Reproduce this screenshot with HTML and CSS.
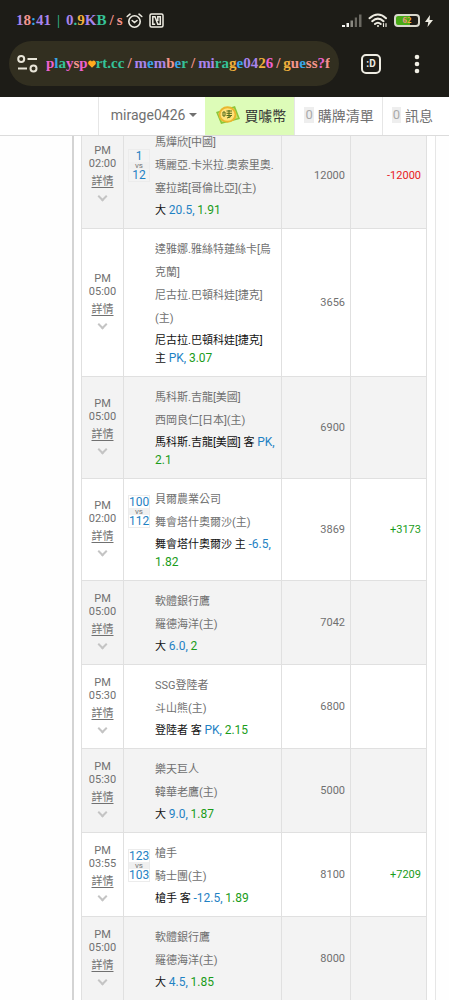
FILE: index.html
```html
<!DOCTYPE html>
<html lang="zh-Hant">
<head>
    <meta charset="utf-8">
    <meta name="viewport" content="width=device-width, initial-scale=1">
    <title>playsport.cc - mirage0426</title>
    <link rel="stylesheet" href="styles.css">
</head>
<body>
    <header class="browser">
        <div class="status">
            <span class="rainbow"><i class="purple">1</i><i class="salmon">8</i><i class="blue">:</i><i class="purple">41</i><i class="teal bar">|</i><i class="purple">0</i><i class="teal">.</i><i class="orange">9</i><i class="purple">K</i><i class="teal">B</i><i class="salmon slash">/</i><i class="salmon">s</i></span>
            <svg class="icon-alarm" width="17" height="16" viewBox="0 0 17 16" fill="none" stroke="#eeece2" stroke-width="1.6" stroke-linecap="round">
                <circle cx="8.500" cy="8.500" r="5.700"/>
                <path d="M1.200 3.500L4 1.200M15.800 3.500L13 1.200M6.200 7.500L8.500 9.500L11 7.500"/>
            </svg>
            <svg class="icon-nfc" width="15" height="15" viewBox="0 0 15 15" fill="none" stroke="#eeece2" stroke-width="1.500">
                <rect x="1" y="1" width="13" height="13" rx="1.500"/>
                <path d="M6.200 11.300H3.800V3.800H6L8.800 11.300H11.300V3.800H8.800V8"/>
            </svg>
            <svg class="icon-signal" width="20" height="13" viewBox="0 0 20 13">
                <path fill="#f4f4f0" d="M0 11h3v2H0zM4.500 9h2.500v4H4.500z"/>
                <path fill="#8b8982" d="M8.500 6.500H11V13H8.500z"/>
                <path fill="#6b6962" d="M12.800 3.500H15V13h-2.200zM17 .5h2.500V13H17z"/>
            </svg>
            <svg class="icon-wifi" width="20" height="15" viewBox="0 0 20 15" fill="none" stroke="#eeece2" stroke-width="2" stroke-linecap="round">
                <path d="M1.500 5.200Q10-2.200 18 5.200M4.200 8.200Q10 3 15.500 8.200M7 11Q10 8.500 12.700 11"/>
                <circle cx="10" cy="13" r="1" fill="#eeece2" stroke="none"/>
                <path d="M15.500 13.500v-3M18 10.500v3" stroke-width="1.200"/>
            </svg>
            <span class="battery"><i class="salmon">6</i><i class="orange">2</i></span>
            <svg class="icon-bolt" width="8" height="12" viewBox="0 0 8 12"><path fill="#eeece2" d="M5 0L0 7h3.300L2.500 12L8 5H4.600z"/></svg>
        </div>
        <div class="toolbar">
            <a class="address" href="#">
                <svg width="21" height="18" viewBox="0 0 21 18" fill="none" stroke="#e8e5d8" stroke-width="2">
                    <circle cx="4.200" cy="4" r="3"/><path d="M10.500 4H20M1 13.500h9"/><circle cx="16.500" cy="13.500" r="3"/>
                </svg>
                <span class="rainbow url"><i class="magenta">p</i><i class="blue">l</i><i class="teal">a</i><i class="magenta">y</i><i class="salmon">s</i><i class="magenta">p</i><svg class="heart" width="8" height="8" viewBox="0 0 8 8"><path fill="#ffaa1e" d="M4 7.800L.4 4.200C-.8 2 2 -.9 4 1.400C6-.9 8.800 2 7.600 4.200z"/></svg><i class="teal">rt.cc</i><i class="salmon slash">/</i><i class="purple">m</i><i class="blue">e</i><i class="purple">m</i><i class="salmon">b</i><i class="blue">e</i><i class="teal">r</i><i class="salmon slash">/</i><i class="purple">mi</i><i class="teal">ra</i><i class="orange">g</i><i class="blue">e</i><i class="purple">04</i><i class="orange">2</i><i class="magenta">6</i><i class="salmon slash">/</i><i class="orange">g</i><i class="salmon">u</i><i class="blue">e</i><i class="salmon">ss</i><i class="magenta">?</i><i class="salmon">f</i></span>
            </a>
            <button class="tabs" type="button" aria-label="Tabs">:D</button>
            <button class="menu" type="button" aria-label="Menu">
                <svg width="6" height="20" viewBox="0 0 6 20" fill="#f0eee4"><circle cx="3" cy="3" r="2.300"/><circle cx="3" cy="10" r="2.300"/><circle cx="3" cy="17" r="2.300"/></svg>
            </button>
        </div>
    </header>

    <nav class="site-nav">
        <button class="nav-item" type="button">mirage0426 <span class="caret"></span></button>
        <a class="nav-item buy" href="#">
            <svg width="24" height="20" viewBox="0 0 24 20">
                <path fill="#8cc63a" d="M0 7L19 1L24 14L5 19z"/>
                <path fill="#c4e463" d="M2 8L18 3L22 13L6 17z"/>
                <ellipse cx="11.500" cy="9.500" rx="9" ry="8.300" fill="#e9b62f"/>
                <ellipse cx="11.500" cy="9.500" rx="7" ry="6.300" fill="#ffe27a"/>
                <path d="M7 7h2v4H7zM10.500 6h5.500M13 5v8M10.500 8.300h5.500M10.500 10.500h5.500M11 13l4-1.500" fill="none" stroke="#4f6b1c"/>
            </svg>
            買噱幣
        </a>
        <a class="nav-item" href="#"><span class="count">0</span>購牌清單</a>
        <a class="nav-item last" href="#"><span class="count">0</span>訊息</a>
    </nav>

    <main class="page">
        <div class="panel">
            <table class="records">
                <tbody>
                    <tr>
                        <td class="time">PM<br>02:00<a href="#">詳情</a><span class="chevron"></span></td>
                        <td>
                            <div class="match">
                                <div class="score"><b>1</b><small>vs</small><b>12</b></div>
                                <div class="teams"><p>馬燁欣[中國]</p><p>瑪麗亞.卡米拉.奧索里奧.塞拉諾[哥倫比亞](主)</p></div>
                                <p class="bet">大 <span class="line">20.5,</span> <span class="odds">1.91</span></p>
                            </div>
                        </td>
                        <td class="num">12000</td>
                        <td class="num lose">-12000</td>
                    </tr>
                    <tr>
                        <td class="time">PM<br>05:00<a href="#">詳情</a><span class="chevron"></span></td>
                        <td>
                            <div class="match">
                                <div class="teams"><p>達雅娜.雅絲特蓮絲卡[烏克蘭]</p><p>尼古拉.巴頓科娃[捷克](主)</p></div>
                                <p class="bet">尼古拉.巴頓科娃[捷克] 主 <span class="line">PK,</span> <span class="odds">3.07</span></p>
                            </div>
                        </td>
                        <td class="num">3656</td>
                        <td class="num"></td>
                    </tr>
                    <tr>
                        <td class="time">PM<br>05:00<a href="#">詳情</a><span class="chevron"></span></td>
                        <td>
                            <div class="match">
                                <div class="teams"><p>馬科斯.吉龍[美國]</p><p>西岡良仁[日本](主)</p></div>
                                <p class="bet">馬科斯.吉龍[美國] 客 <span class="line">PK,</span> <span class="odds">2.1</span></p>
                            </div>
                        </td>
                        <td class="num">6900</td>
                        <td class="num"></td>
                    </tr>
                    <tr>
                        <td class="time">PM<br>02:00<a href="#">詳情</a><span class="chevron"></span></td>
                        <td>
                            <div class="match">
                                <div class="score"><b>100</b><small>vs</small><b>112</b></div>
                                <div class="teams"><p>貝爾農業公司</p><p>舞會塔什奧爾沙(主)</p></div>
                                <p class="bet">舞會塔什奧爾沙 主 <span class="line">-6.5,</span> <span class="odds">1.82</span></p>
                            </div>
                        </td>
                        <td class="num">3869</td>
                        <td class="num win">+3173</td>
                    </tr>
                    <tr>
                        <td class="time">PM<br>05:00<a href="#">詳情</a><span class="chevron"></span></td>
                        <td>
                            <div class="match">
                                <div class="teams"><p>軟體銀行鷹</p><p>羅德海洋(主)</p></div>
                                <p class="bet">大 <span class="line">6.0,</span> <span class="odds">2</span></p>
                            </div>
                        </td>
                        <td class="num">7042</td>
                        <td class="num"></td>
                    </tr>
                    <tr>
                        <td class="time">PM<br>05:30<a href="#">詳情</a><span class="chevron"></span></td>
                        <td>
                            <div class="match">
                                <div class="teams"><p>SSG登陸者</p><p>斗山熊(主)</p></div>
                                <p class="bet">登陸者 客 <span class="line">PK,</span> <span class="odds">2.15</span></p>
                            </div>
                        </td>
                        <td class="num">6800</td>
                        <td class="num"></td>
                    </tr>
                    <tr>
                        <td class="time">PM<br>05:30<a href="#">詳情</a><span class="chevron"></span></td>
                        <td>
                            <div class="match">
                                <div class="teams"><p>樂天巨人</p><p>韓華老鷹(主)</p></div>
                                <p class="bet">大 <span class="line">9.0,</span> <span class="odds">1.87</span></p>
                            </div>
                        </td>
                        <td class="num">5000</td>
                        <td class="num"></td>
                    </tr>
                    <tr>
                        <td class="time">PM<br>03:55<a href="#">詳情</a><span class="chevron"></span></td>
                        <td>
                            <div class="match">
                                <div class="score"><b>123</b><small>vs</small><b>103</b></div>
                                <div class="teams"><p>槍手</p><p>騎士團(主)</p></div>
                                <p class="bet">槍手 客 <span class="line">-12.5,</span> <span class="odds">1.89</span></p>
                            </div>
                        </td>
                        <td class="num">8100</td>
                        <td class="num win">+7209</td>
                    </tr>
                    <tr>
                        <td class="time">PM<br>05:00<a href="#">詳情</a><span class="chevron"></span></td>
                        <td>
                            <div class="match">
                                <div class="teams"><p>軟體銀行鷹</p><p>羅德海洋(主)</p></div>
                                <p class="bet">大 <span class="line">4.5,</span> <span class="odds">1.85</span></p>
                            </div>
                        </td>
                        <td class="num">8000</td>
                        <td class="num"></td>
                    </tr>
                </tbody>
            </table>
        </div>
    </main>
</body>
</html>
```
FILE: styles.css
```css
* {
    margin: 0;
    padding: 0;
    box-sizing: border-box;
}

body {
    height: 100vh;
    display: flex;
    flex-direction: column;
    overflow: hidden;
    background: #fefefe;
    color: #707070;
    font-family: Roboto, "Noto Sans CJK TC", sans-serif;
    font-size: 11px;
}

a {
    color: inherit;
    text-decoration: none;
}

button {
    border: none;
    background: none;
    font: inherit;
    color: inherit;
    cursor: pointer;
}

/* browser bar */
.browser {
    flex: none;
    background: #1d1c17;
    padding-bottom: 11px;
}

.status {
    height: 41px;
    padding: 0 16px;
    display: flex;
    align-items: center;
}

.rainbow {
    font-family: "Liberation Serif", serif;
    font-weight: bold;
    font-size: 15px;
    white-space: nowrap;
}

.rainbow i,
.battery i {
    font-style: normal;
}

.purple { color: #a884ee; }
.salmon { color: #f4958d; }
.blue { color: #39a5e6; }
.teal { color: #35c299; }
.orange { color: #efb03c; }
.magenta { color: #ee62cf; }

.slash {
    padding: 0 3px;
}

.bar {
    padding: 0 6px;
    font-weight: normal;
}

.icon-alarm {
    margin-left: 4px;
}

.icon-nfc {
    margin-left: 6px;
}

.icon-signal {
    margin-left: auto;
}

.icon-wifi {
    margin: 0 6px;
}

.battery {
    width: 26px;
    height: 13px;
    border: 2px solid #d9d8ce;
    border-radius: 4px;
    background: linear-gradient(90deg, #48a916 62%, #1d1c17 62%);
    font: bold 9px/9px "Liberation Serif", serif;
    text-align: center;
}

.icon-bolt {
    margin-left: 5px;
}

.toolbar {
    display: flex;
    align-items: center;
    gap: 22px;
    padding: 0 22px 0 9px;
}

.address {
    flex: 1;
    min-width: 0;
    height: 45px;
    padding: 0 8px;
    display: flex;
    align-items: center;
    gap: 8px;
    border-radius: 23px;
    background: #322f20;
}

.address > svg {
    flex: none;
}

.url {
    overflow: hidden;
}

.tabs {
    width: 20px;
    height: 20px;
    border: 2px solid #eeece2;
    border-radius: 5px;
    color: #eeece2;
    font-weight: bold;
    font-size: 10px;
    line-height: 14px;
}

.menu {
    width: 20px;
    height: 24px;
    margin-left: 4px;
    display: flex;
    align-items: center;
    justify-content: center;
}

/* site navigation */
.site-nav {
    flex: none;
    height: 39px;
    display: flex;
    justify-content: flex-end;
    border-bottom: 1px solid #dcdcdc;
    background: #fff;
    font-size: 14px;
    position: relative;
    z-index: 1;
}

.nav-item {
    display: flex;
    align-items: center;
    gap: 4px;
    padding: 0 8px 2px 9px;
    border-left: 1px solid #e6e6e6;
    white-space: nowrap;
}

button.nav-item {
    padding-left: 12px;
}

.nav-item.buy {
    padding-left: 10px;
    background: #ddfcb8;
    border-left-color: #ddfcb8;
    color: #333;
}

.nav-item.last {
    padding-right: 16px;
}

.caret {
    border: 4px solid transparent;
    border-top-color: #707070;
    border-bottom: none;
}

.count {
    padding: 0 1px;
    background: #eee;
    color: #aaa;
    font-size: 13px;
    line-height: 16px;
}

/* records table, scrolled up under the navigation */
.page {
    flex: 1;
    min-height: 0;
    overflow: hidden;
    padding: 0 13px 0 72px;
}

.panel {
    margin-top: -15px;
    padding: 0 8px 0 7px;
    border-left: 2px solid #d4d4d4;
    border-right: 1px solid #e6e6e6;
    background: #fff;
}

.records {
    width: 100%;
    border-collapse: collapse;
}

.records td {
    border: 1px solid #e0e0e0;
    padding: 9px 5px 8px 4px;
    vertical-align: middle;
}

.records tr:nth-child(odd) {
    background: #f3f3f3;
}

.records .time {
    width: 42px;
    padding: 0 0 2px;
    text-align: center;
    line-height: 13px;
}

.time a {
    display: block;
    line-height: 24px;
    text-decoration: underline;
    text-underline-offset: 2px;
}

.chevron {
    display: block;
    width: 7px;
    height: 7px;
    margin: -1px auto 4px;
    border: solid #c4c4c4;
    border-width: 0 2px 2px 0;
    transform: rotate(45deg);
}

.match {
    display: grid;
    grid-template-columns: 22px 1fr;
    column-gap: 5px;
    align-items: center;
}

.score {
    border: 1px solid #ececec;
    color: #1f82c4;
    text-align: center;
}

.score b {
    display: block;
    font-weight: normal;
    font-size: 12px;
    line-height: 12px;
}

.score small {
    display: block;
    background: #f0f0f0;
    color: #777;
    font-size: 8px;
    line-height: 7px;
}

.teams {
    grid-column: 2;
    line-height: 23px;
}

.bet {
    grid-column: 2;
    margin-top: 2px;
    color: #111;
    line-height: 18px;
}

.line,
.odds {
    font-size: 12px;
    line-height: 14px;
    white-space: nowrap;
}

.line {
    color: #1f82c4;
}

.odds {
    color: #1a9c1a;
}

.records .num {
    width: 69px;
    padding: 0 5px;
    text-align: right;
}

.records .num:last-child {
    width: 76px;
}

.records .win {
    color: #1a9c1a;
}

.records .lose {
    color: #e8211d;
}
```
